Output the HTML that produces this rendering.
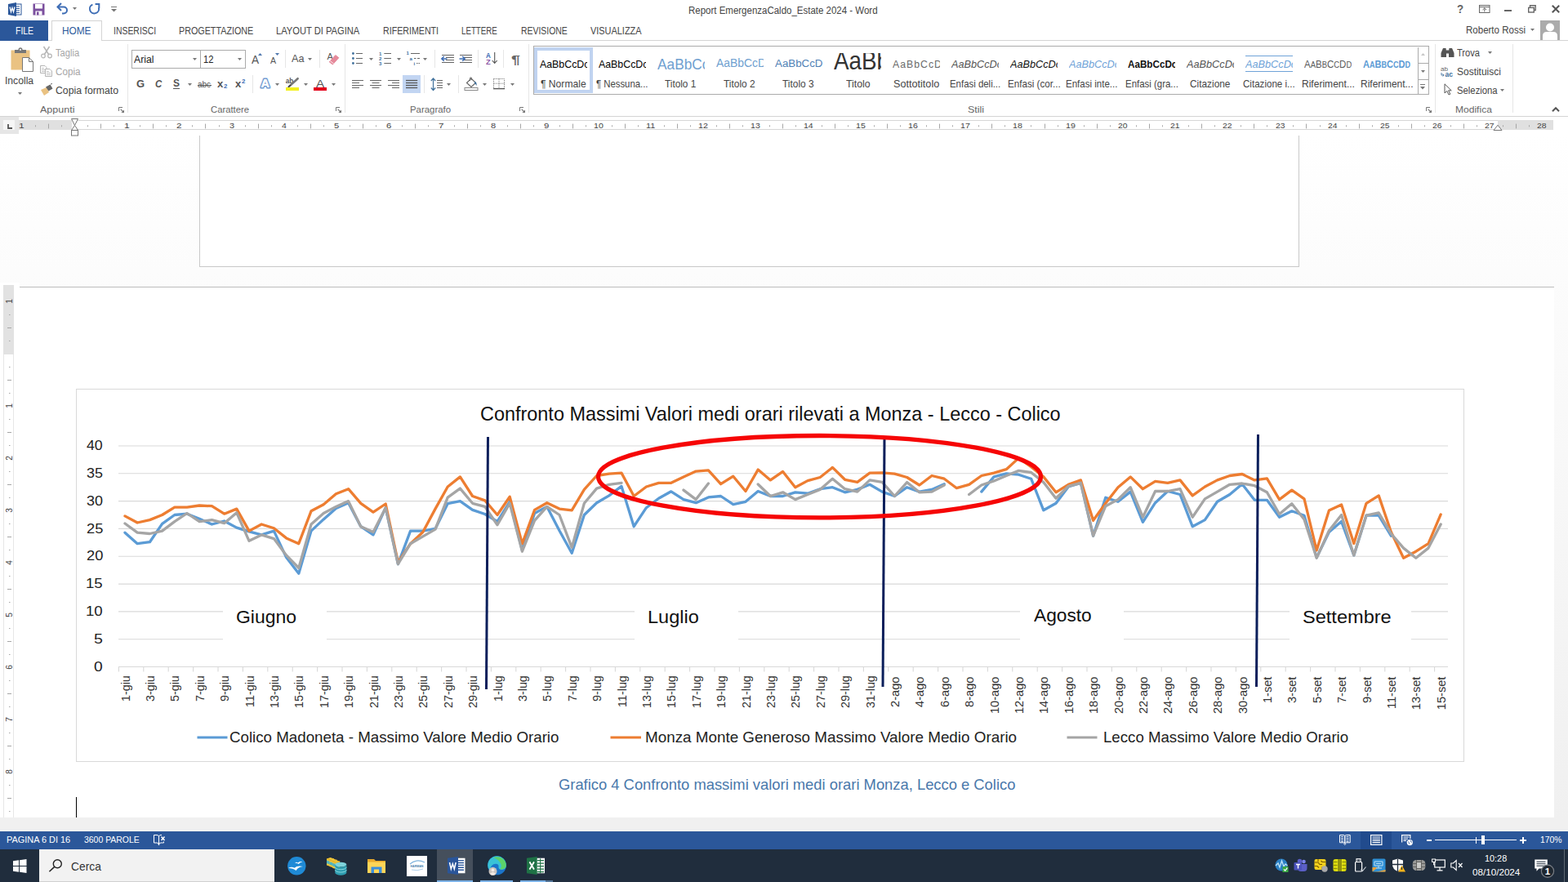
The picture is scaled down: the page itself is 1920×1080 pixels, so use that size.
<!DOCTYPE html><html lang="it"><head><meta charset="utf-8"><title>Report EmergenzaCaldo_Estate 2024 - Word</title><style>
*{box-sizing:border-box;margin:0;padding:0}
html,body{width:1920px;height:1080px;overflow:hidden;background:#fff}
body{position:relative;font-family:"Liberation Sans",sans-serif;font-size:12px;color:#444}
.t{position:absolute;white-space:nowrap;transform-origin:0 50%;display:block}
.a{position:absolute}
svg{position:absolute;overflow:visible}
</style></head><body>
<div class="a" style="left:0;top:0;width:1920px;height:144px;background:#fff"></div><span class="t" style="left:843.08px;top:6px;font-size:12.30px;line-height:14px;color:#444;transform:scaleX(0.9340);">Report EmergenzaCaldo_Estate 2024 - Word</span><svg style="left:10px;top:3px" width="17" height="17" viewBox="0 0 17 17"><rect x="7" y="2" width="9" height="13" fill="#fff" stroke="#2b579a"/><path d="M9 5h5M9 7.5h5M9 10h5M9 12.5h5" stroke="#2b579a" stroke-width="1"/><path d="M0 2L10 0V17L0 15Z" fill="#2b579a"/><path d="M2 5.5L3.5 11.5L5 6.5L6.5 11.5L8 5.5" fill="none" stroke="#fff" stroke-width="1.3"/></svg><svg style="left:40px;top:4px" width="15" height="15" viewBox="0 0 15 15"><path d="M0.5 0.5H14.5V14.5H0.5Z" fill="#7b4f9e"/><rect x="3" y="1" width="9" height="5.5" fill="#fff"/><rect x="3.5" y="9.5" width="8" height="5" fill="#fff"/><rect x="5" y="10.5" width="2.5" height="4" fill="#7b4f9e"/></svg><svg style="left:69px;top:3px" width="16" height="15" viewBox="0 0 16 15"><path d="M1.5 5.5H9A4 4 0 0 1 9 13.5H7" fill="none" stroke="#3e6db5" stroke-width="2"/><path d="M6 1L1.5 5.5L6 10" fill="none" stroke="#3e6db5" stroke-width="2"/></svg><svg style="left:89.0px;top:9.0px" width="5" height="3"><path d="M0 0H5 L2.5 3 Z" fill="#777"/></svg><svg style="left:108px;top:3px" width="16" height="15" viewBox="0 0 16 15"><path d="M5.4 2.6A5.6 5.6 0 1 0 12.9 6.4" fill="none" stroke="#3e6db5" stroke-width="2"/><path d="M8.6 2H13.3V7" fill="none" stroke="#3e6db5" stroke-width="2"/></svg><svg style="left:136px;top:8px" width="7" height="8"><path d="M0 0.5H7" stroke="#777" stroke-width="1"/><path d="M0 3H7L3.5 6.5Z" fill="#777"/></svg><span class="t" style="left:1784.47px;top:3px;font-size:14.60px;line-height:16px;color:#666;transform:scaleX(0.9089);font-weight:bold;">?</span><svg style="left:1811px;top:6px" width="14" height="10"><rect x="0.5" y="0.5" width="12.5" height="9" fill="none" stroke="#666"/><path d="M0.5 2.5H13 M6.8 8.5V4 M4.5 6L6.8 3.8L9 6" fill="none" stroke="#666"/></svg><div class="a" style="left:1842px;top:11.7px;width:9px;height:2.2px;background:#666"></div><svg style="left:1871px;top:6px" width="10" height="10"><path d="M2.5 3V0.8H9.2V6.5H7.5" fill="none" stroke="#666" stroke-width="1.4"/><rect x="0.7" y="3.4" width="6.6" height="5.6" fill="#fff" stroke="#666" stroke-width="1.4"/></svg><svg style="left:1900px;top:6px" width="10" height="10"><path d="M0.8 0.8L9.2 9.2M9.2 0.8L0.8 9.2" stroke="#555" stroke-width="2"/></svg><div class="a" style="left:0;top:49px;width:1920px;height:1px;background:#d4d4d4"></div><div class="a" style="left:0;top:25px;width:59px;height:25px;background:#2b579a"></div><div class="a" style="left:63px;top:25px;width:62px;height:25px;background:#fff;border:1px solid #d4d4d4;border-bottom:none"></div><span class="t" style="left:18.56px;top:31px;font-size:12.30px;line-height:14px;color:#fff;transform:scaleX(0.8498);">FILE</span><span class="t" style="left:75.55px;top:31px;font-size:12.30px;line-height:14px;color:#2b579a;transform:scaleX(0.9626);">HOME</span><span class="t" style="left:139.36px;top:31px;font-size:12.30px;line-height:14px;color:#444;transform:scaleX(0.8484);">INSERISCI</span><span class="t" style="left:219.14px;top:31px;font-size:12.30px;line-height:14px;color:#444;transform:scaleX(0.8752);">PROGETTAZIONE</span><span class="t" style="left:338.41px;top:31px;font-size:12.30px;line-height:14px;color:#444;transform:scaleX(0.9069);">LAYOUT DI PAGINA</span><span class="t" style="left:469.45px;top:31px;font-size:12.30px;line-height:14px;color:#444;transform:scaleX(0.8666);">RIFERIMENTI</span><span class="t" style="left:565.42px;top:31px;font-size:12.30px;line-height:14px;color:#444;transform:scaleX(0.7907);">LETTERE</span><span class="t" style="left:637.57px;top:31px;font-size:12.30px;line-height:14px;color:#444;transform:scaleX(0.8481);">REVISIONE</span><span class="t" style="left:723.20px;top:31px;font-size:12.30px;line-height:14px;color:#444;transform:scaleX(0.8882);">VISUALIZZA</span><span class="t" style="left:1794.58px;top:30px;font-size:12.00px;line-height:14px;color:#444;transform:scaleX(0.9599);">Roberto Rossi</span><svg style="left:1873.9px;top:35.1px" width="5" height="3"><path d="M0 0H5 L2.5 3 Z" fill="#777"/></svg><svg style="left:1886px;top:25px" width="24" height="24" viewBox="0 0 24 24"><rect width="24" height="24" fill="#ababab"/><circle cx="12" cy="8.5" r="5" fill="#fff"/><path d="M3 24V19Q3 14 8 14H16Q21 14 21 19V24Z" fill="#fff"/></svg><div class="a" style="left:0;top:142px;width:1920px;height:1px;background:#d4d4d4"></div><div class="a" style="left:156.0px;top:54.0px;width:1px;height:84.0px;background:#e6e6e6"></div><div class="a" style="left:422.0px;top:54.0px;width:1px;height:84.0px;background:#e6e6e6"></div><div class="a" style="left:647.0px;top:54.0px;width:1px;height:84.0px;background:#e6e6e6"></div><div class="a" style="left:1757.0px;top:54.0px;width:1px;height:84.0px;background:#e6e6e6"></div><div class="a" style="left:1852.0px;top:54.0px;width:1px;height:84.0px;background:#e6e6e6"></div><span class="t" style="left:49.00px;top:128px;font-size:11.30px;line-height:12px;color:#666;transform:scaleX(1.1108);">Appunti</span><svg style="left:144.5px;top:131.0px" width="8" height="8"><path d="M0.5 5V0.5H5" fill="none" stroke="#777" stroke-width="1"/><path d="M2.6 2.6L6 6" stroke="#777" stroke-width="1.1"/><path d="M7 3.4V7H3.4Z" fill="#777"/></svg><span class="t" style="left:258.04px;top:128px;font-size:11.30px;line-height:12px;color:#666;transform:scaleX(0.9977);">Carattere</span><svg style="left:411.0px;top:131.0px" width="8" height="8"><path d="M0.5 5V0.5H5" fill="none" stroke="#777" stroke-width="1"/><path d="M2.6 2.6L6 6" stroke="#777" stroke-width="1.1"/><path d="M7 3.4V7H3.4Z" fill="#777"/></svg><span class="t" style="left:501.79px;top:128px;font-size:11.30px;line-height:12px;color:#666;transform:scaleX(1.0090);">Paragrafo</span><svg style="left:636.0px;top:131.0px" width="8" height="8"><path d="M0.5 5V0.5H5" fill="none" stroke="#777" stroke-width="1"/><path d="M2.6 2.6L6 6" stroke="#777" stroke-width="1.1"/><path d="M7 3.4V7H3.4Z" fill="#777"/></svg><span class="t" style="left:1184.50px;top:128px;font-size:11.30px;line-height:12px;color:#666;transform:scaleX(1.1018);">Stili</span><svg style="left:1745.5px;top:131.0px" width="8" height="8"><path d="M0.5 5V0.5H5" fill="none" stroke="#777" stroke-width="1"/><path d="M2.6 2.6L6 6" stroke="#777" stroke-width="1.1"/><path d="M7 3.4V7H3.4Z" fill="#777"/></svg><span class="t" style="left:1781.74px;top:128px;font-size:11.30px;line-height:12px;color:#666;transform:scaleX(1.0668);">Modifica</span><svg style="left:1900px;top:131px" width="10" height="6"><path d="M1 5.2L5 1.2L9 5.2" fill="none" stroke="#555" stroke-width="2"/></svg><svg style="left:13px;top:58px" width="29" height="31" viewBox="0 0 29 31"><rect x="0.5" y="3.5" width="23" height="24" fill="#eac282"/><path d="M5 7V3H9.5Q9.5 0.3 12 0.3T14.5 3H19V7Z" fill="#777"/><circle cx="12" cy="2.8" r="1.1" fill="#fff"/><path d="M14.5 12.5H22.5L27.5 17.5V29.5H14.5Z" fill="#fff" stroke="#777"/><path d="M22.5 12.5V17.5H27.5" fill="none" stroke="#777"/></svg><span class="t" style="left:6.41px;top:92px;font-size:12.30px;line-height:14px;color:#444;transform:scaleX(0.9872);">Incolla</span><svg style="left:21.8px;top:112.5px" width="5" height="3"><path d="M0 0H5 L2.5 3 Z" fill="#777"/></svg><svg style="left:49px;top:56px" width="16" height="16" viewBox="0 0 16 16"><path d="M4.5 1L10.5 10.5 M11.5 1L5.5 10.5" stroke="#b5b5b5" stroke-width="1.5" fill="none"/><circle cx="4" cy="12.5" r="2.3" fill="none" stroke="#b5b5b5" stroke-width="1.2"/><circle cx="12" cy="12.5" r="2.3" fill="none" stroke="#b5b5b5" stroke-width="1.2"/></svg><span class="t" style="left:68.28px;top:58px;font-size:12.30px;line-height:14px;color:#a6a6a6;transform:scaleX(0.9068);">Taglia</span><svg style="left:49px;top:79px" width="16" height="16" viewBox="0 0 16 16"><path d="M0.5 1.5H6L8 3.5V10.5H0.5Z" fill="#fff" stroke="#b5b5b5"/><path d="M2 4.5H5M2 6.5H6M2 8.5H6" stroke="#c5c5c5"/><path d="M6.5 5.5H12L14.5 8V14.5H6.5Z" fill="#fff" stroke="#b5b5b5"/><path d="M8 8.5H11M8 10.5H13M8 12.5H13" stroke="#c5c5c5"/></svg><span class="t" style="left:67.92px;top:81px;font-size:12.30px;line-height:14px;color:#a6a6a6;transform:scaleX(0.9490);">Copia</span><svg style="left:49px;top:102px" width="17" height="16" viewBox="0 0 17 16"><path d="M1 8L8 5L11 11L5 15Z" fill="#eac282"/><path d="M7 4.5L12.5 1.5L15.5 6.5L10.5 9.5Z" fill="#666"/><path d="M13 1L15 0.5" stroke="#666"/></svg><span class="t" style="left:67.89px;top:104px;font-size:12.30px;line-height:14px;color:#444;transform:scaleX(0.9982);">Copia formato</span><div class="a" style="left:161px;top:61px;width:85px;height:23px;background:#fff;border:1px solid #ababab"></div><div class="a" style="left:245px;top:61px;width:56px;height:23px;background:#fff;border:1px solid #ababab"></div><span class="t" style="left:164.20px;top:66px;font-size:12.30px;line-height:14px;color:#222;transform:scaleX(0.9932);">Arial</span><span class="t" style="left:249.22px;top:66px;font-size:12.30px;line-height:14px;color:#222;transform:scaleX(0.9106);">12</span><svg style="left:235.7px;top:70.9px" width="5" height="3"><path d="M0 0H5 L2.5 3 Z" fill="#777"/></svg><svg style="left:290.9px;top:70.9px" width="5" height="3"><path d="M0 0H5 L2.5 3 Z" fill="#777"/></svg><span class="t" style="left:307.50px;top:65px;font-size:14.20px;line-height:16px;color:#555;transform:scaleX(0.9565);">A</span><svg style="left:315.7px;top:64.5px" width="5" height="3"><path d="M0 3H5L2.5 0Z" fill="#4f77ad"/></svg><span class="t" style="left:330.50px;top:68px;font-size:11.20px;line-height:12px;color:#555;transform:scaleX(0.9462);">A</span><svg style="left:337.0px;top:64.5px" width="5" height="3"><path d="M0 0H5 L2.5 3 Z" fill="#4f77ad"/></svg><div class="a" style="left:349.0px;top:61.0px;width:1px;height:22.0px;background:#e6e6e6"></div><span class="t" style="left:357.00px;top:65px;font-size:12.60px;line-height:14px;color:#555;transform:scaleX(1.0066);">Aa</span><svg style="left:376.9px;top:70.9px" width="5" height="3"><path d="M0 0H5 L2.5 3 Z" fill="#777"/></svg><div class="a" style="left:391.0px;top:61.0px;width:1px;height:22.0px;background:#e6e6e6"></div><svg style="left:400px;top:64px" width="16" height="16" viewBox="0 0 16 16"><text x="0.4" y="8.8" font-size="11" fill="#555" font-family="Liberation Sans, sans-serif">A</text><path d="M10.8 3.6L14.8 6.7L7.4 15L3.2 11.8Z" fill="#e58a9b" stroke="#e58a9b" stroke-width="1" stroke-linejoin="round"/><path d="M4.2 10.6L8.6 14" stroke="#fff" stroke-width="0.8"/></svg><span class="t" style="left:166.68px;top:96px;font-size:12.00px;line-height:14px;color:#555;transform:scaleX(1.0784);font-weight:bold;">G</span><span class="t" style="left:189.64px;top:96px;font-size:12.00px;line-height:14px;color:#555;transform:scaleX(0.9524);font-weight:bold;font-style:italic;">C</span><span class="t" style="left:212.16px;top:95px;font-size:12.00px;line-height:14px;color:#555;transform:scaleX(0.9973);font-weight:bold;">S</span><div class="a" style="left:212px;top:107.5px;width:8px;height:1.2px;background:#555"></div><svg style="left:229.9px;top:101.9px" width="5" height="3"><path d="M0 0H5 L2.5 3 Z" fill="#777"/></svg><span class="t" style="left:242.10px;top:97px;font-size:10.50px;line-height:12px;color:#555;transform:scaleX(0.9524);">abc</span><div class="a" style="left:242px;top:103.6px;width:16.5px;height:1.1px;background:#555"></div><span class="t" style="left:266.20px;top:96px;font-size:12.60px;line-height:14px;color:#555;transform:scaleX(1.0390);font-weight:bold;">x</span><span class="t" style="left:274.27px;top:102px;font-size:6.50px;line-height:7px;color:#3e6db5;transform:scaleX(1.1931);font-weight:bold;">2</span><span class="t" style="left:288.30px;top:96px;font-size:12.60px;line-height:14px;color:#555;transform:scaleX(1.0390);font-weight:bold;">x</span><span class="t" style="left:296.17px;top:96px;font-size:6.50px;line-height:7px;color:#3e6db5;transform:scaleX(1.1931);font-weight:bold;">2</span><div class="a" style="left:309.0px;top:92.3px;width:1px;height:21.9px;background:#e6e6e6"></div><svg style="left:317px;top:94px" width="16" height="17" viewBox="0 0 16 17"><g font-size="14.5" font-weight="bold" font-family="Liberation Sans, sans-serif" stroke-linejoin="round"><text x="2.6" y="13.4" fill="#c9dcf4" stroke="#c9dcf4" stroke-width="4.2">A</text><text x="2.6" y="13.4" fill="#4a7cc0" stroke="#4a7cc0" stroke-width="2.4">A</text><text x="2.6" y="13.4" fill="#fff" stroke="#fff" stroke-width="0.7">A</text></g></svg><svg style="left:336.8px;top:101.9px" width="5" height="3"><path d="M0 0H5 L2.5 3 Z" fill="#777"/></svg><svg style="left:349px;top:95px" width="18" height="17" viewBox="0 0 18 17"><text x="0.8" y="7" font-size="9.6" font-weight="bold" fill="#555" font-family="Liberation Sans, sans-serif" textLength="9.5" lengthAdjust="spacingAndGlyphs">ab</text><path d="M15.6 1.2L5.6 10.4" stroke="#777" stroke-width="2.6" stroke-linecap="round"/><path d="M6.6 9.4L4.2 11.4" stroke="#444" stroke-width="1.6" stroke-linecap="round"/><rect x="1" y="12" width="16" height="4" fill="#f3f01e"/></svg><svg style="left:371.8px;top:101.9px" width="5" height="3"><path d="M0 0H5 L2.5 3 Z" fill="#777"/></svg><span class="t" style="left:387.00px;top:95px;font-size:13.00px;line-height:15px;color:#555;transform:scaleX(1.1711);">A</span><div class="a" style="left:384px;top:107.2px;width:16px;height:4px;background:#e3001b"></div><svg style="left:405.9px;top:101.9px" width="5" height="3"><path d="M0 0H5 L2.5 3 Z" fill="#777"/></svg><svg style="left:430px;top:62px" width="16" height="18"><circle cx="2.4" cy="3.5" r="1.4" fill="#41719c"/><path d="M6 3.5H14" stroke="#666" stroke-width="1"/><circle cx="2.4" cy="9.5" r="1.4" fill="#41719c"/><path d="M6 9.5H14" stroke="#666" stroke-width="1"/><circle cx="2.4" cy="15.5" r="1.4" fill="#41719c"/><path d="M6 15.5H14" stroke="#666" stroke-width="1"/></svg><svg style="left:452.1px;top:70.9px" width="5" height="3"><path d="M0 0H5 L2.5 3 Z" fill="#777"/></svg><svg style="left:463px;top:62px" width="17" height="18"><text x="1" y="5.7" font-size="6" font-weight="bold" fill="#41719c" font-family="Liberation Sans, sans-serif">1</text><path d="M7.3 3.5H16" stroke="#666" stroke-width="1"/><text x="1" y="11.7" font-size="6" font-weight="bold" fill="#41719c" font-family="Liberation Sans, sans-serif">2</text><path d="M7.3 9.5H16" stroke="#666" stroke-width="1"/><text x="1" y="17.7" font-size="6" font-weight="bold" fill="#41719c" font-family="Liberation Sans, sans-serif">3</text><path d="M7.3 15.5H16" stroke="#666" stroke-width="1"/></svg><svg style="left:485.8px;top:70.9px" width="5" height="3"><path d="M0 0H5 L2.5 3 Z" fill="#777"/></svg><svg style="left:497px;top:62px" width="18" height="18"><text x="0.5" y="5.2" font-size="6" font-weight="bold" fill="#41719c" font-family="Liberation Sans, sans-serif">1</text><path d="M6 3.5H17" stroke="#666" stroke-width="1"/><text x="4.5" y="11.6" font-size="6" font-weight="bold" fill="#41719c" font-family="Liberation Sans, sans-serif">a</text><path d="M10 9.5H12.5M14 9.5H17" stroke="#666" stroke-width="1"/><text x="9.5" y="17.6" font-size="6" font-weight="bold" fill="#41719c" font-family="Liberation Sans, sans-serif">i</text><path d="M13 15.5H14.5M15.5 15.5H17" stroke="#666" stroke-width="1"/></svg><svg style="left:517.8px;top:70.9px" width="5" height="3"><path d="M0 0H5 L2.5 3 Z" fill="#777"/></svg><div class="a" style="left:532.0px;top:61.0px;width:1px;height:22.0px;background:#e6e6e6"></div><svg style="left:539.9px;top:65px" width="17" height="14"><path d="M1 2.5H16" stroke="#666" stroke-width="1"/><path d="M6 5.5H16" stroke="#666" stroke-width="1"/><path d="M6 8.5H16" stroke="#666" stroke-width="1"/><path d="M1 11.5H16" stroke="#666" stroke-width="1"/><path d="M7.5 6.9H1 M3.8 4L0.8 6.9L3.8 9.8" fill="none" stroke="#3e6db5" stroke-width="1.5"/></svg><svg style="left:562.2px;top:65px" width="17" height="14"><path d="M1 2.5H16" stroke="#666" stroke-width="1"/><path d="M6 5.5H16" stroke="#666" stroke-width="1"/><path d="M6 8.5H16" stroke="#666" stroke-width="1"/><path d="M1 11.5H16" stroke="#666" stroke-width="1"/><path d="M0.5 6.9H7 M4.2 4L7.2 6.9L4.2 9.8" fill="none" stroke="#3e6db5" stroke-width="1.5"/></svg><div class="a" style="left:585.0px;top:61.0px;width:1px;height:22.0px;background:#e6e6e6"></div><span class="t" style="left:595.14px;top:63px;font-size:8.80px;line-height:10px;color:#3e6db5;transform:scaleX(0.9191);font-weight:bold;">A</span><span class="t" style="left:595.11px;top:71px;font-size:8.80px;line-height:10px;color:#8e5ba8;transform:scaleX(1.0566);font-weight:bold;">Z</span><svg style="left:602px;top:64px" width="8" height="15"><path d="M3.7 0V13 M0.7 10L3.7 13.4L6.7 10" fill="none" stroke="#555" stroke-width="1.1"/></svg><div class="a" style="left:616.0px;top:61.0px;width:1px;height:22.0px;background:#e6e6e6"></div><span class="t" style="left:626.41px;top:64px;font-size:15.00px;line-height:17px;color:#666;transform:scaleX(1.3067);font-weight:bold;">¶</span><svg style="left:431.0px;top:96px" width="15" height="14"><path d="M0.0 2.5h14" stroke="#666" stroke-width="1"/><path d="M0.0 5.5h9" stroke="#666" stroke-width="1"/><path d="M0.0 8.5h14" stroke="#666" stroke-width="1"/><path d="M0.0 11.5h9" stroke="#666" stroke-width="1"/></svg><svg style="left:452.8px;top:96px" width="15" height="14"><path d="M0.0 2.5h14" stroke="#666" stroke-width="1"/><path d="M2.5 5.5h9" stroke="#666" stroke-width="1"/><path d="M0.0 8.5h14" stroke="#666" stroke-width="1"/><path d="M2.5 11.5h9" stroke="#666" stroke-width="1"/></svg><svg style="left:474.8px;top:96px" width="15" height="14"><path d="M0.0 2.5h14" stroke="#666" stroke-width="1"/><path d="M5.0 5.5h9" stroke="#666" stroke-width="1"/><path d="M0.0 8.5h14" stroke="#666" stroke-width="1"/><path d="M5.0 11.5h9" stroke="#666" stroke-width="1"/></svg><div class="a" style="left:493px;top:92.3px;width:22px;height:22.2px;background:#c2d5f2"></div><svg style="left:497px;top:96px" width="15" height="14"><path d="M0 2.5h14.2" stroke="#555" stroke-width="1.25"/><path d="M0 5.5h14.2" stroke="#555" stroke-width="1.25"/><path d="M0 8.5h14.2" stroke="#555" stroke-width="1.25"/><path d="M0 11.5h14.2" stroke="#555" stroke-width="1.25"/></svg><div class="a" style="left:519.0px;top:92.3px;width:1px;height:21.9px;background:#e6e6e6"></div><svg style="left:527px;top:95px" width="16" height="17"><path d="M3.5 1V15.5 M0.8 4L3.5 1L6.2 4 M0.8 12.5L3.5 15.5L6.2 12.5" fill="none" stroke="#41719c" stroke-width="1.2"/><path d="M8 3.5H15" stroke="#666" stroke-width="1"/><path d="M8 6.5H15" stroke="#666" stroke-width="1"/><path d="M8 9.5H15" stroke="#666" stroke-width="1"/><path d="M8 12.5H15" stroke="#666" stroke-width="1"/></svg><svg style="left:547.0px;top:101.9px" width="5" height="3"><path d="M0 0H5 L2.5 3 Z" fill="#777"/></svg><div class="a" style="left:561.0px;top:92.3px;width:1px;height:21.9px;background:#e6e6e6"></div><svg style="left:568px;top:94px" width="18" height="17" viewBox="0 0 18 17"><path d="M3.5 7.5L9 2L14.5 7.5L9 12.5Z" fill="#fff" stroke="#666" stroke-width="1.2"/><path d="M7.5 5V1.8Q7.5 0.8 8.5 0.8T9.5 1.8V4" fill="none" stroke="#666" stroke-width="1"/><path d="M13 5.5Q16.5 7 15.5 11Q14.5 9 13 8Z" fill="#41719c"/><rect x="1" y="13.5" width="16" height="3" fill="#fff" stroke="#888"/></svg><svg style="left:590.8px;top:101.9px" width="5" height="3"><path d="M0 0H5 L2.5 3 Z" fill="#777"/></svg><svg style="left:604px;top:96px" width="14" height="14"><path d="M0.5 0.5H13.5V12 M0.5 0.5V12 M7 0.5V12 M0.5 6.2H13.5" fill="none" stroke="#777" stroke-dasharray="1.2 1.2"/><path d="M0 12.6H14" stroke="#555" stroke-width="1.4"/></svg><svg style="left:624.9px;top:101.9px" width="5" height="3"><path d="M0 0H5 L2.5 3 Z" fill="#777"/></svg><div class="a" style="left:653px;top:56px;width:1097px;height:60px;background:#fff;border:1px solid #ababab"></div><div class="a" style="left:654px;top:58px;width:72px;height:56px;border:4px solid #c0d3f0;background:#fff"></div><div class="a" style="left:1735.5px;top:57.5px;width:1px;height:57px;background:#ababab"></div><div class="a" style="left:1735.5px;top:77px;width:14px;height:1px;background:#ababab"></div><div class="a" style="left:1735.5px;top:96.5px;width:14px;height:1px;background:#ababab"></div><svg style="left:1739.6px;top:65.2px" width="5" height="3"><path d="M0 3H5L2.5 0Z" fill="#c6c6c6"/></svg><svg style="left:1739.7px;top:85.9px" width="5" height="3"><path d="M0 0H5 L2.5 3 Z" fill="#777"/></svg><svg style="left:1739.2px;top:102.6px" width="6" height="7"><path d="M0 0.5H6" stroke="#777"/><path d="M0 3H6L3 6.5Z" fill="#777"/></svg><div class="a" style="left:660.9px;top:60px;width:58.1px;height:30px;overflow:hidden"><span class="t" style="left:0.00px;top:11px;font-size:12.90px;line-height:15px;color:#000;transform:scaleX(0.9587);">AaBbCcDc</span></div><div class="a" style="left:732.7px;top:60px;width:58.3px;height:30px;overflow:hidden"><span class="t" style="left:0.00px;top:11px;font-size:12.90px;line-height:15px;color:#000;transform:scaleX(0.9587);">AaBbCcDc</span></div><div class="a" style="left:804.7px;top:60px;width:58.1px;height:30px;overflow:hidden"><span class="t" style="left:0.00px;top:8px;font-size:19.00px;line-height:21px;color:#6f9fd0;transform:scaleX(0.9103);">AaBbCcD</span></div><div class="a" style="left:876.9px;top:60px;width:58.1px;height:30px;overflow:hidden"><span class="t" style="left:0.00px;top:9px;font-size:14.70px;line-height:16px;color:#6f9fd0;transform:scaleX(0.9476);">AaBbCcDd</span></div><div class="a" style="left:948.7px;top:60px;width:59.3px;height:30px;overflow:hidden"><span class="t" style="left:0.00px;top:10px;font-size:13.70px;line-height:15px;color:#5081b5;transform:scaleX(0.9725);">AaBbCcD</span></div><div class="a" style="left:1021.3px;top:65px;width:58.1px;height:25px;overflow:hidden"><span class="t" style="left:0.00px;top:-9px;font-size:32.00px;line-height:36px;color:#333;transform:scaleX(0.8680);">AaBb</span></div><div class="a" style="left:1092.9px;top:60px;width:58.1px;height:30px;overflow:hidden"><span class="t" style="left:0.00px;top:12px;font-size:12.00px;line-height:14px;color:#6a6a6a;transform:scaleX(1.0216);letter-spacing:1.00px;">AaBbCcDd</span></div><div class="a" style="left:1165.3px;top:60px;width:58.1px;height:30px;overflow:hidden"><span class="t" style="left:0.00px;top:11px;font-size:12.90px;line-height:15px;color:#555;transform:scaleX(0.9834);font-style:italic;">AaBbCcDc</span></div><div class="a" style="left:1237.3px;top:60px;width:57.9px;height:30px;overflow:hidden"><span class="t" style="left:0.00px;top:11px;font-size:12.90px;line-height:15px;color:#111;transform:scaleX(0.9834);font-style:italic;">AaBbCcDc</span></div><div class="a" style="left:1309.0px;top:60px;width:58.0px;height:30px;overflow:hidden"><span class="t" style="left:0.00px;top:11px;font-size:12.90px;line-height:15px;color:#6fa3d8;transform:scaleX(0.9852);font-style:italic;">AaBbCcDc</span></div><div class="a" style="left:1380.6px;top:60px;width:58.4px;height:30px;overflow:hidden"><span class="t" style="left:0.00px;top:11px;font-size:12.90px;line-height:15px;color:#111;transform:scaleX(0.9060);font-weight:bold;">AaBbCcDc</span></div><div class="a" style="left:1452.9px;top:60px;width:58.3px;height:30px;overflow:hidden"><span class="t" style="left:0.00px;top:11px;font-size:12.90px;line-height:15px;color:#555;transform:scaleX(0.9870);font-style:italic;">AaBbCcDc</span></div><div class="a" style="left:1524.8px;top:60px;width:58.2px;height:30px;overflow:hidden"><span class="t" style="left:0.00px;top:11px;font-size:12.90px;line-height:15px;color:#6fa3d8;transform:scaleX(0.9870);font-style:italic;">AaBbCcDc</span></div><div class="a" style="left:1597.1px;top:60px;width:57.9px;height:30px;overflow:hidden"><span class="t" style="left:0;top:12px;font-size:12.40px;line-height:14px;color:#5a5a5a;transform:scaleX(0.9285);">A<span style="font-size:10.17px">A</span>B<span style="font-size:10.17px">B</span>C<span style="font-size:10.17px">C</span>D<span style="font-size:10.17px">D</span>E<span style="font-size:10.17px">E</span></span></div><div class="a" style="left:1669.0px;top:60px;width:58.0px;height:30px;overflow:hidden"><span class="t" style="left:0;top:12px;font-size:12.40px;line-height:14px;color:#5b9bd5;transform:scaleX(0.8902);font-weight:bold;">A<span style="font-size:10.17px">A</span>B<span style="font-size:10.17px">B</span>C<span style="font-size:10.17px">C</span>D<span style="font-size:10.17px">D</span>E<span style="font-size:10.17px">E</span></span></div><span class="t" style="left:661.84px;top:96px;font-size:12.10px;line-height:14px;color:#444;transform:scaleX(1.0016);">¶ Normale</span><span class="t" style="left:729.96px;top:96px;font-size:12.10px;line-height:14px;color:#444;transform:scaleX(0.9380);">¶ Nessuna...</span><span class="t" style="left:814.36px;top:96px;font-size:12.10px;line-height:14px;color:#444;transform:scaleX(0.9746);">Titolo 1</span><span class="t" style="left:886.36px;top:96px;font-size:12.10px;line-height:14px;color:#444;transform:scaleX(0.9876);">Titolo 2</span><span class="t" style="left:958.36px;top:96px;font-size:12.10px;line-height:14px;color:#444;transform:scaleX(0.9845);">Titolo 3</span><span class="t" style="left:1035.65px;top:96px;font-size:12.10px;line-height:14px;color:#444;transform:scaleX(1.0164);">Titolo</span><span class="t" style="left:1093.89px;top:96px;font-size:12.10px;line-height:14px;color:#444;transform:scaleX(1.0458);">Sottotitolo</span><span class="t" style="left:1162.89px;top:96px;font-size:12.10px;line-height:14px;color:#444;transform:scaleX(0.9438);">Enfasi deli...</span><span class="t" style="left:1233.67px;top:96px;font-size:12.10px;line-height:14px;color:#444;transform:scaleX(0.9614);">Enfasi (cor...</span><span class="t" style="left:1305.38px;top:96px;font-size:12.10px;line-height:14px;color:#444;transform:scaleX(0.9536);">Enfasi inte...</span><span class="t" style="left:1377.58px;top:96px;font-size:12.10px;line-height:14px;color:#444;transform:scaleX(0.9467);">Enfasi (gra...</span><span class="t" style="left:1456.71px;top:96px;font-size:12.10px;line-height:14px;color:#444;transform:scaleX(0.9804);">Citazione</span><span class="t" style="left:1522.22px;top:96px;font-size:12.10px;line-height:14px;color:#444;transform:scaleX(0.9575);">Citazione i...</span><span class="t" style="left:1593.54px;top:96px;font-size:12.10px;line-height:14px;color:#444;transform:scaleX(0.9959);">Riferiment...</span><span class="t" style="left:1665.64px;top:96px;font-size:12.10px;line-height:14px;color:#444;transform:scaleX(0.9895);">Riferiment...</span><div class="a" style="left:1525px;top:68px;width:58px;height:1px;background:#6fa3d8"></div><div class="a" style="left:1525px;top:87px;width:58px;height:1px;background:#6fa3d8"></div><svg style="left:1764px;top:58px" width="17" height="13" viewBox="0 0 17 13"><path d="M1.5 4.5L3 1H6.5L7 4.5V12H0.5V7Z M15.5 4.5L14 1H10.5L10 4.5V12H16.5V7Z" fill="#555"/><rect x="7" y="3.5" width="3" height="4" fill="#555"/></svg><span class="t" style="left:1783.78px;top:58px;font-size:12.30px;line-height:14px;color:#444;transform:scaleX(0.9008);">Trova</span><svg style="left:1821.5px;top:63.0px" width="5" height="3"><path d="M0 0H5 L2.5 3 Z" fill="#777"/></svg><svg style="left:1764px;top:80px" width="18" height="15" viewBox="0 0 18 15"><text x="0" y="6.5" font-size="8" fill="#666" font-family="Liberation Sans, sans-serif">ab</text><text x="5.5" y="14" font-size="8.5" font-weight="bold" fill="#41719c" font-family="Liberation Sans, sans-serif">ac</text><path d="M1 9V12H4 M2.6 10.5L4.2 12L2.6 13.5" fill="none" stroke="#41719c" stroke-width="0.9"/></svg><span class="t" style="left:1783.52px;top:81px;font-size:12.30px;line-height:14px;color:#444;transform:scaleX(0.9738);">Sostituisci</span><svg style="left:1768px;top:102px" width="10" height="15"><path d="M1 0.8V12L3.8 9.4L6 14L7.8 13.2L5.6 8.8H9.2Z" fill="#fff" stroke="#555" stroke-width="1"/></svg><span class="t" style="left:1783.55px;top:104px;font-size:12.30px;line-height:14px;color:#444;transform:scaleX(0.9193);">Seleziona</span><svg style="left:1837.0px;top:109.1px" width="5" height="3"><path d="M0 0H5 L2.5 3 Z" fill="#777"/></svg>
<div class="a" style="left:0;top:144px;width:1920px;height:874px;background:linear-gradient(#fff 20px,#f0f0f0 860px)"></div>
<div class="a" style="left:0;top:143px;width:1920px;height:21px;background:#fff"></div><div class="a" style="left:0;top:143px;width:23px;height:21px;background:#e6e6e6"></div><div class="a" style="left:23px;top:147px;width:65px;height:12px;background:#e0e0e0"></div><div class="a" style="left:88px;top:147px;width:1746px;height:12px;background:#fff;border-top:1px solid #d6d6d6;border-bottom:1px solid #d6d6d6"></div><div class="a" style="left:1834px;top:147px;width:68px;height:12px;background:#e0e0e0"></div><div class="a" style="left:4px;top:147px;width:14px;height:12px;background:#f6f6f6"></div><svg style="left:9px;top:152px" width="7" height="7"><path d="M1 0V5H6" fill="none" stroke="#555" stroke-width="1.8"/></svg><svg style="left:0;top:147px" width="1920" height="16"><path d="M59.5 4.6V10.4" stroke="#a6a6a6" stroke-width="1"/><rect x="43.0" y="6.3" width="1" height="2" fill="#a6a6a6"/><rect x="75.0" y="6.3" width="1" height="2" fill="#a6a6a6"/><path d="M123.5 4.6V10.4" stroke="#a6a6a6" stroke-width="1"/><rect x="107.0" y="6.3" width="1" height="2" fill="#a6a6a6"/><rect x="139.0" y="6.3" width="1" height="2" fill="#a6a6a6"/><path d="M187.5 4.6V10.4" stroke="#a6a6a6" stroke-width="1"/><rect x="171.0" y="6.3" width="1" height="2" fill="#a6a6a6"/><rect x="203.0" y="6.3" width="1" height="2" fill="#a6a6a6"/><path d="M251.5 4.6V10.4" stroke="#a6a6a6" stroke-width="1"/><rect x="235.0" y="6.3" width="1" height="2" fill="#a6a6a6"/><rect x="268.0" y="6.3" width="1" height="2" fill="#a6a6a6"/><path d="M316.5 4.6V10.4" stroke="#a6a6a6" stroke-width="1"/><rect x="300.0" y="6.3" width="1" height="2" fill="#a6a6a6"/><rect x="332.0" y="6.3" width="1" height="2" fill="#a6a6a6"/><path d="M380.5 4.6V10.4" stroke="#a6a6a6" stroke-width="1"/><rect x="364.0" y="6.3" width="1" height="2" fill="#a6a6a6"/><rect x="396.0" y="6.3" width="1" height="2" fill="#a6a6a6"/><path d="M444.5 4.6V10.4" stroke="#a6a6a6" stroke-width="1"/><rect x="428.0" y="6.3" width="1" height="2" fill="#a6a6a6"/><rect x="460.0" y="6.3" width="1" height="2" fill="#a6a6a6"/><path d="M508.5 4.6V10.4" stroke="#a6a6a6" stroke-width="1"/><rect x="492.0" y="6.3" width="1" height="2" fill="#a6a6a6"/><rect x="524.0" y="6.3" width="1" height="2" fill="#a6a6a6"/><path d="M572.5 4.6V10.4" stroke="#a6a6a6" stroke-width="1"/><rect x="556.0" y="6.3" width="1" height="2" fill="#a6a6a6"/><rect x="588.0" y="6.3" width="1" height="2" fill="#a6a6a6"/><path d="M637.5 4.6V10.4" stroke="#a6a6a6" stroke-width="1"/><rect x="621.0" y="6.3" width="1" height="2" fill="#a6a6a6"/><rect x="653.0" y="6.3" width="1" height="2" fill="#a6a6a6"/><path d="M701.5 4.6V10.4" stroke="#a6a6a6" stroke-width="1"/><rect x="685.0" y="6.3" width="1" height="2" fill="#a6a6a6"/><rect x="717.0" y="6.3" width="1" height="2" fill="#a6a6a6"/><path d="M765.5 4.6V10.4" stroke="#a6a6a6" stroke-width="1"/><rect x="749.0" y="6.3" width="1" height="2" fill="#a6a6a6"/><rect x="781.0" y="6.3" width="1" height="2" fill="#a6a6a6"/><path d="M829.5 4.6V10.4" stroke="#a6a6a6" stroke-width="1"/><rect x="813.0" y="6.3" width="1" height="2" fill="#a6a6a6"/><rect x="845.0" y="6.3" width="1" height="2" fill="#a6a6a6"/><path d="M893.5 4.6V10.4" stroke="#a6a6a6" stroke-width="1"/><rect x="877.0" y="6.3" width="1" height="2" fill="#a6a6a6"/><rect x="909.0" y="6.3" width="1" height="2" fill="#a6a6a6"/><path d="M958.5 4.6V10.4" stroke="#a6a6a6" stroke-width="1"/><rect x="942.0" y="6.3" width="1" height="2" fill="#a6a6a6"/><rect x="974.0" y="6.3" width="1" height="2" fill="#a6a6a6"/><path d="M1022.5 4.6V10.4" stroke="#a6a6a6" stroke-width="1"/><rect x="1006.0" y="6.3" width="1" height="2" fill="#a6a6a6"/><rect x="1038.0" y="6.3" width="1" height="2" fill="#a6a6a6"/><path d="M1086.5 4.6V10.4" stroke="#a6a6a6" stroke-width="1"/><rect x="1070.0" y="6.3" width="1" height="2" fill="#a6a6a6"/><rect x="1102.0" y="6.3" width="1" height="2" fill="#a6a6a6"/><path d="M1150.5 4.6V10.4" stroke="#a6a6a6" stroke-width="1"/><rect x="1134.0" y="6.3" width="1" height="2" fill="#a6a6a6"/><rect x="1166.0" y="6.3" width="1" height="2" fill="#a6a6a6"/><path d="M1214.5 4.6V10.4" stroke="#a6a6a6" stroke-width="1"/><rect x="1198.0" y="6.3" width="1" height="2" fill="#a6a6a6"/><rect x="1230.0" y="6.3" width="1" height="2" fill="#a6a6a6"/><path d="M1279.5 4.6V10.4" stroke="#a6a6a6" stroke-width="1"/><rect x="1262.0" y="6.3" width="1" height="2" fill="#a6a6a6"/><rect x="1295.0" y="6.3" width="1" height="2" fill="#a6a6a6"/><path d="M1343.5 4.6V10.4" stroke="#a6a6a6" stroke-width="1"/><rect x="1327.0" y="6.3" width="1" height="2" fill="#a6a6a6"/><rect x="1359.0" y="6.3" width="1" height="2" fill="#a6a6a6"/><path d="M1407.5 4.6V10.4" stroke="#a6a6a6" stroke-width="1"/><rect x="1391.0" y="6.3" width="1" height="2" fill="#a6a6a6"/><rect x="1423.0" y="6.3" width="1" height="2" fill="#a6a6a6"/><path d="M1471.5 4.6V10.4" stroke="#a6a6a6" stroke-width="1"/><rect x="1455.0" y="6.3" width="1" height="2" fill="#a6a6a6"/><rect x="1487.0" y="6.3" width="1" height="2" fill="#a6a6a6"/><path d="M1535.5 4.6V10.4" stroke="#a6a6a6" stroke-width="1"/><rect x="1519.0" y="6.3" width="1" height="2" fill="#a6a6a6"/><rect x="1551.0" y="6.3" width="1" height="2" fill="#a6a6a6"/><path d="M1599.5 4.6V10.4" stroke="#a6a6a6" stroke-width="1"/><rect x="1583.0" y="6.3" width="1" height="2" fill="#a6a6a6"/><rect x="1616.0" y="6.3" width="1" height="2" fill="#a6a6a6"/><path d="M1664.5 4.6V10.4" stroke="#a6a6a6" stroke-width="1"/><rect x="1648.0" y="6.3" width="1" height="2" fill="#a6a6a6"/><rect x="1680.0" y="6.3" width="1" height="2" fill="#a6a6a6"/><path d="M1728.5 4.6V10.4" stroke="#a6a6a6" stroke-width="1"/><rect x="1712.0" y="6.3" width="1" height="2" fill="#a6a6a6"/><rect x="1744.0" y="6.3" width="1" height="2" fill="#a6a6a6"/><path d="M1792.5 4.6V10.4" stroke="#a6a6a6" stroke-width="1"/><rect x="1776.0" y="6.3" width="1" height="2" fill="#a6a6a6"/><rect x="1808.0" y="6.3" width="1" height="2" fill="#a6a6a6"/><path d="M1856.5 4.6V10.4" stroke="#a6a6a6" stroke-width="1"/><rect x="1840.0" y="6.3" width="1" height="2" fill="#a6a6a6"/><rect x="1872.0" y="6.3" width="1" height="2" fill="#a6a6a6"/></svg><span class="t" style="left:23.29px;top:148px;font-size:9.80px;line-height:11px;color:#444;transform:scaleX(1.2381);">1</span><span class="t" style="left:151.67px;top:148px;font-size:9.80px;line-height:11px;color:#444;transform:scaleX(1.2381);">1</span><span class="t" style="left:216.13px;top:148px;font-size:9.80px;line-height:11px;color:#444;transform:scaleX(1.1842);">2</span><span class="t" style="left:280.57px;top:148px;font-size:9.80px;line-height:11px;color:#444;transform:scaleX(1.1117);">3</span><span class="t" style="left:344.88px;top:148px;font-size:9.80px;line-height:11px;color:#444;transform:scaleX(1.0681);">4</span><span class="t" style="left:408.84px;top:148px;font-size:9.80px;line-height:11px;color:#444;transform:scaleX(1.1349);">5</span><span class="t" style="left:472.90px;top:148px;font-size:9.80px;line-height:11px;color:#444;transform:scaleX(1.1590);">6</span><span class="t" style="left:537.08px;top:148px;font-size:9.80px;line-height:11px;color:#444;transform:scaleX(1.1842);">7</span><span class="t" style="left:601.41px;top:148px;font-size:9.80px;line-height:11px;color:#444;transform:scaleX(1.1349);">8</span><span class="t" style="left:665.59px;top:148px;font-size:9.80px;line-height:11px;color:#444;transform:scaleX(1.1590);">9</span><span class="t" style="left:726.82px;top:148px;font-size:9.80px;line-height:11px;color:#444;transform:scaleX(1.0787);">10</span><span class="t" style="left:791.35px;top:148px;font-size:9.80px;line-height:11px;color:#444;transform:scaleX(1.1052);">11</span><span class="t" style="left:855.19px;top:148px;font-size:9.80px;line-height:11px;color:#444;transform:scaleX(1.0895);">12</span><span class="t" style="left:919.39px;top:148px;font-size:9.80px;line-height:11px;color:#444;transform:scaleX(1.0787);">13</span><span class="t" style="left:983.59px;top:148px;font-size:9.80px;line-height:11px;color:#444;transform:scaleX(1.0681);">14</span><span class="t" style="left:1047.77px;top:148px;font-size:9.80px;line-height:11px;color:#444;transform:scaleX(1.0787);">15</span><span class="t" style="left:1111.96px;top:148px;font-size:9.80px;line-height:11px;color:#444;transform:scaleX(1.0787);">16</span><span class="t" style="left:1176.14px;top:148px;font-size:9.80px;line-height:11px;color:#444;transform:scaleX(1.0895);">17</span><span class="t" style="left:1240.34px;top:148px;font-size:9.80px;line-height:11px;color:#444;transform:scaleX(1.0787);">18</span><span class="t" style="left:1304.52px;top:148px;font-size:9.80px;line-height:11px;color:#444;transform:scaleX(1.0895);">19</span><span class="t" style="left:1368.94px;top:148px;font-size:9.80px;line-height:11px;color:#444;transform:scaleX(1.0578);">20</span><span class="t" style="left:1433.13px;top:148px;font-size:9.80px;line-height:11px;color:#444;transform:scaleX(1.0681);">21</span><span class="t" style="left:1497.32px;top:148px;font-size:9.80px;line-height:11px;color:#444;transform:scaleX(1.0681);">22</span><span class="t" style="left:1561.51px;top:148px;font-size:9.80px;line-height:11px;color:#444;transform:scaleX(1.0578);">23</span><span class="t" style="left:1625.71px;top:148px;font-size:9.80px;line-height:11px;color:#444;transform:scaleX(1.0476);">24</span><span class="t" style="left:1689.89px;top:148px;font-size:9.80px;line-height:11px;color:#444;transform:scaleX(1.0578);">25</span><span class="t" style="left:1754.08px;top:148px;font-size:9.80px;line-height:11px;color:#444;transform:scaleX(1.0578);">26</span><span class="t" style="left:1818.27px;top:148px;font-size:9.80px;line-height:11px;color:#444;transform:scaleX(1.0681);">27</span><span class="t" style="left:1882.46px;top:148px;font-size:9.80px;line-height:11px;color:#444;transform:scaleX(1.0578);">28</span><svg style="left:87px;top:145px" width="10" height="22"><path d="M0.5 0.5H8.5L4.5 8.5Z M4.5 8.5L8.5 14.5H0.5Z" fill="#fff" stroke="#777" stroke-width="1"/><rect x="0.5" y="14.5" width="8" height="6.5" fill="#fff" stroke="#777"/></svg><svg style="left:1828px;top:152px" width="12" height="9"><path d="M1 7.5L6 1.2L11 7.5Z" fill="#fff" stroke="#777" stroke-width="1"/></svg>
<div class="a" style="left:244px;top:166px;width:1347px;height:161px;background:#fff;border:1px solid #c9c9c9;border-top:none"></div>
<div class="a" style="left:24px;top:351px;width:1879px;height:650px;background:#fff;border-top:1px solid #bdbdbd"></div>
<div class="a" style="left:0;top:346px;width:24px;height:655px;background:#fff"></div><div class="a" style="left:4px;top:349px;width:13px;height:85px;background:#e2e2e2"></div><div class="a" style="left:4px;top:434px;width:13px;height:567px;background:#fff;border-left:1px solid #e6e6e6;border-right:1px solid #e6e6e6"></div><svg style="left:0;top:0" width="24" height="1080"><path d="M9 401.5H14" stroke="#a6a6a6"/><rect x="11" y="385.0" width="1.5" height="1" fill="#a6a6a6"/><rect x="11" y="417.0" width="1.5" height="1" fill="#a6a6a6"/><text x="0" y="0" transform="translate(15.2 369.0) rotate(-90)" text-anchor="middle" font-size="10.2" fill="#444" font-family="Liberation Sans, sans-serif">1</text><path d="M9 465.5H14" stroke="#a6a6a6"/><rect x="11" y="449.0" width="1.5" height="1" fill="#a6a6a6"/><rect x="11" y="481.0" width="1.5" height="1" fill="#a6a6a6"/><path d="M9 529.5H14" stroke="#a6a6a6"/><rect x="11" y="513.0" width="1.5" height="1" fill="#a6a6a6"/><rect x="11" y="545.0" width="1.5" height="1" fill="#a6a6a6"/><text x="0" y="0" transform="translate(15.2 497.0) rotate(-90)" text-anchor="middle" font-size="10.2" fill="#444" font-family="Liberation Sans, sans-serif">1</text><path d="M9 593.5H14" stroke="#a6a6a6"/><rect x="11" y="577.0" width="1.5" height="1" fill="#a6a6a6"/><rect x="11" y="609.0" width="1.5" height="1" fill="#a6a6a6"/><text x="0" y="0" transform="translate(15.2 561.0) rotate(-90)" text-anchor="middle" font-size="10.2" fill="#444" font-family="Liberation Sans, sans-serif">2</text><path d="M9 657.5H14" stroke="#a6a6a6"/><rect x="11" y="641.0" width="1.5" height="1" fill="#a6a6a6"/><rect x="11" y="673.0" width="1.5" height="1" fill="#a6a6a6"/><text x="0" y="0" transform="translate(15.2 625.0) rotate(-90)" text-anchor="middle" font-size="10.2" fill="#444" font-family="Liberation Sans, sans-serif">3</text><path d="M9 721.5H14" stroke="#a6a6a6"/><rect x="11" y="705.0" width="1.5" height="1" fill="#a6a6a6"/><rect x="11" y="737.0" width="1.5" height="1" fill="#a6a6a6"/><text x="0" y="0" transform="translate(15.2 689.0) rotate(-90)" text-anchor="middle" font-size="10.2" fill="#444" font-family="Liberation Sans, sans-serif">4</text><path d="M9 785.5H14" stroke="#a6a6a6"/><rect x="11" y="769.0" width="1.5" height="1" fill="#a6a6a6"/><rect x="11" y="801.0" width="1.5" height="1" fill="#a6a6a6"/><text x="0" y="0" transform="translate(15.2 753.0) rotate(-90)" text-anchor="middle" font-size="10.2" fill="#444" font-family="Liberation Sans, sans-serif">5</text><path d="M9 849.5H14" stroke="#a6a6a6"/><rect x="11" y="833.0" width="1.5" height="1" fill="#a6a6a6"/><rect x="11" y="865.0" width="1.5" height="1" fill="#a6a6a6"/><text x="0" y="0" transform="translate(15.2 817.0) rotate(-90)" text-anchor="middle" font-size="10.2" fill="#444" font-family="Liberation Sans, sans-serif">6</text><path d="M9 913.5H14" stroke="#a6a6a6"/><rect x="11" y="897.0" width="1.5" height="1" fill="#a6a6a6"/><rect x="11" y="929.0" width="1.5" height="1" fill="#a6a6a6"/><text x="0" y="0" transform="translate(15.2 881.0) rotate(-90)" text-anchor="middle" font-size="10.2" fill="#444" font-family="Liberation Sans, sans-serif">7</text><path d="M9 977.5H14" stroke="#a6a6a6"/><rect x="11" y="961.0" width="1.5" height="1" fill="#a6a6a6"/><rect x="11" y="993.0" width="1.5" height="1" fill="#a6a6a6"/><text x="0" y="0" transform="translate(15.2 945.0) rotate(-90)" text-anchor="middle" font-size="10.2" fill="#444" font-family="Liberation Sans, sans-serif">8</text></svg>
<div class="a" style="left:93px;top:476px;width:1700px;height:457px;background:#fff;border:1px solid #d9d9d9"></div><svg style="left:0;top:0" width="1920" height="1080"><path d="M145 816.5H1773" stroke="#d9d9d9" stroke-width="1.1"/><path d="M145 782.7H1773" stroke="#d9d9d9" stroke-width="1.1"/><path d="M145 748.9H1773" stroke="#d9d9d9" stroke-width="1.1"/><path d="M145 715.1H1773" stroke="#d9d9d9" stroke-width="1.1"/><path d="M145 681.2H1773" stroke="#d9d9d9" stroke-width="1.1"/><path d="M145 647.4H1773" stroke="#d9d9d9" stroke-width="1.1"/><path d="M145 613.6H1773" stroke="#d9d9d9" stroke-width="1.1"/><path d="M145 579.8H1773" stroke="#d9d9d9" stroke-width="1.1"/><path d="M145 546.0H1773" stroke="#d9d9d9" stroke-width="1.1"/><path d="M145.4 816.5v6M175.8 816.5v6M206.2 816.5v6M236.6 816.5v6M267.0 816.5v6M297.4 816.5v6M327.8 816.5v6M358.2 816.5v6M388.6 816.5v6M419.0 816.5v6M449.4 816.5v6M479.8 816.5v6M510.2 816.5v6M540.6 816.5v6M571.0 816.5v6M601.4 816.5v6M631.8 816.5v6M662.2 816.5v6M692.6 816.5v6M723.0 816.5v6M753.4 816.5v6M783.8 816.5v6M814.2 816.5v6M844.6 816.5v6M875.0 816.5v6M905.4 816.5v6M935.8 816.5v6M966.2 816.5v6M996.6 816.5v6M1027.0 816.5v6M1057.4 816.5v6M1087.8 816.5v6M1118.2 816.5v6M1148.6 816.5v6M1179.0 816.5v6M1209.4 816.5v6M1239.8 816.5v6M1270.2 816.5v6M1300.6 816.5v6M1331.0 816.5v6M1361.4 816.5v6M1391.8 816.5v6M1422.2 816.5v6M1452.6 816.5v6M1483.0 816.5v6M1513.4 816.5v6M1543.8 816.5v6M1574.2 816.5v6M1604.6 816.5v6M1635.0 816.5v6M1665.4 816.5v6M1695.8 816.5v6M1726.2 816.5v6M1756.6 816.5v6" stroke="#d9d9d9" stroke-width="1.1"/><path d="M153.0 652.2L168.2 665.7L183.4 663.7L198.6 641.4L213.8 630.5L229.0 629.2L244.2 635.3L259.4 642.0L274.6 638.0L289.8 646.1L305.0 650.8L320.2 654.9L335.4 650.1L350.6 682.6L365.8 702.2L381.0 650.1L396.2 635.9L411.4 622.4L426.6 615.7L441.8 644.7L457.0 654.9L472.2 621.7L487.4 690.7L502.6 650.1L517.8 650.1L533.0 647.4L548.2 616.7L563.4 613.6L578.6 624.4L593.8 629.5L609.0 638.6L624.2 614.3L639.4 673.8L654.6 628.5L669.8 620.4L685.0 649.8L700.2 677.2L715.4 630.5L730.6 615.7L745.8 606.9L761.0 595.4L776.2 644.7L791.4 621.7L806.6 610.2L821.8 601.8L837.0 611.6L852.2 615.7L867.4 608.9L882.6 607.5L897.8 617.7L913.0 614.3L928.2 601.5L943.4 607.5L958.6 607.5L973.8 602.8L989.0 604.2L1004.2 598.7L1019.4 596.7L1034.6 602.8L1049.8 599.4L1065.0 593.3L1080.2 602.1L1095.4 607.5L1110.6 596.7L1125.8 602.1L1141.0 599.4L1156.2 592.7M1201.8 602.1L1217.0 583.9L1232.2 579.8L1247.4 581.2L1262.6 586.2L1277.8 624.8L1293.0 616.3L1308.2 596.0L1323.4 591.3L1338.6 656.2L1353.8 609.2L1369.0 614.3L1384.2 602.1L1399.4 639.3L1414.6 615.7L1429.8 601.5L1445.0 605.5L1460.2 644.7L1475.4 636.6L1490.6 614.3L1505.8 605.5L1521.0 592.7L1536.2 612.3L1551.4 612.3L1566.6 633.2L1581.8 625.8L1597.0 631.2L1612.2 682.6L1627.4 651.5L1642.6 638.6L1657.8 679.9L1673.0 631.2L1688.2 631.2L1703.4 656.2" fill="none" stroke="#5b9bd5" stroke-width="3.3" stroke-linejoin="round" stroke-linecap="round"/><path d="M153.0 631.9L168.2 640.0L183.4 636.6L198.6 630.5L213.8 621.1L229.0 621.1L244.2 619.0L259.4 619.7L274.6 629.2L289.8 623.1L305.0 650.1L320.2 642.0L335.4 646.8L350.6 658.9L365.8 665.7L381.0 625.8L396.2 617.7L411.4 604.8L426.6 598.7L441.8 616.3L457.0 627.1L472.2 617.0L487.4 688.7L502.6 665.7L517.8 651.5L533.0 623.1L548.2 596.0L563.4 583.9L578.6 607.5L593.8 612.9L609.0 630.5L624.2 608.2L639.4 665.7L654.6 624.4L669.8 615.7L685.0 623.1L700.2 624.8L715.4 599.4L730.6 582.5L745.8 580.1L761.0 579.1L776.2 607.5L791.4 596.0L806.6 591.3L821.8 591.3L837.0 583.9L852.2 577.1L867.4 575.8L882.6 592.7L897.8 583.2L913.0 601.5L928.2 575.1L943.4 587.9L958.6 577.4L973.8 596.7L989.0 588.6L1004.2 584.5L1019.4 572.4L1034.6 587.3L1049.8 590.3L1065.0 579.1L1080.2 578.8L1095.4 580.2L1110.6 584.5L1125.8 594.0L1141.0 582.5L1156.2 586.2L1171.4 597.7L1186.6 593.3L1201.8 582.5L1217.0 579.1L1232.2 574.7L1247.4 560.9L1262.6 571.7L1277.8 583.9L1293.0 602.8L1308.2 593.3L1323.4 587.9L1338.6 637.3L1353.8 616.3L1369.0 596.7L1384.2 583.9L1399.4 598.7L1414.6 589.3L1429.8 591.3L1445.0 587.9L1460.2 606.9L1475.4 596.0L1490.6 587.9L1505.8 582.5L1521.0 580.5L1536.2 587.9L1551.4 585.9L1566.6 611.6L1581.8 600.1L1597.0 610.9L1612.2 673.8L1627.4 625.1L1642.6 618.0L1657.8 665.4L1673.0 616.3L1688.2 606.9L1703.4 651.5L1718.6 683.3L1733.8 675.2L1749.0 665.7L1764.2 629.9" fill="none" stroke="#ed7d31" stroke-width="3.3" stroke-linejoin="round" stroke-linecap="round"/><path d="M153.0 641.0L168.2 652.2L183.4 653.5L198.6 650.1L213.8 638.6L229.0 628.5L244.2 638.6L259.4 636.6L274.6 640.7L289.8 627.8L305.0 662.3L320.2 654.9L335.4 659.6L350.6 679.9L365.8 695.5L381.0 642.0L396.2 628.5L411.4 620.4L426.6 613.6L441.8 644.7L457.0 651.5L472.2 621.7L487.4 690.7L502.6 665.7L517.8 656.9L533.0 648.1L548.2 609.2L563.4 598.1L578.6 616.3L593.8 620.4L609.0 642.7L624.2 616.3L639.4 675.2L654.6 637.3L669.8 620.4L685.0 630.5L700.2 670.4L715.4 616.3L730.6 598.1L745.8 593.3L761.0 591.3M837.0 600.1L852.2 611.6L867.4 592.0M928.2 593.0L943.4 607.5L958.6 602.8L973.8 611.6L989.0 605.5L1004.2 599.4L1019.4 586.2L1034.6 598.7L1049.8 602.1L1065.0 587.9L1080.2 590.3L1095.4 607.5L1110.6 590.6L1125.8 602.8L1141.0 602.1L1156.2 594.0M1186.6 605.5L1201.8 594.0L1217.0 588.9L1232.2 582.5L1247.4 576.4L1262.6 578.5L1277.8 590.6L1293.0 610.2L1308.2 595.4L1323.4 591.3L1338.6 656.2L1353.8 619.7L1369.0 611.6L1384.2 596.7L1399.4 633.2L1414.6 601.5L1429.8 601.5L1445.0 598.7L1460.2 633.2L1475.4 610.9L1490.6 602.1L1505.8 593.3L1521.0 592.0L1536.2 594.7L1551.4 602.8L1566.6 629.5L1581.8 616.7L1597.0 635.9L1612.2 683.3L1627.4 649.8L1642.6 630.5L1657.8 679.9L1673.0 631.2L1688.2 627.8L1703.4 653.5L1718.6 671.1L1733.8 683.3L1749.0 671.1L1764.2 642.0" fill="none" stroke="#a5a5a5" stroke-width="3.3" stroke-linejoin="round" stroke-linecap="round"/><rect x="273" y="728" width="127" height="72" fill="#fff"/><rect x="777" y="728" width="127" height="72" fill="#fff"/><rect x="1249" y="728" width="127" height="72" fill="#fff"/><rect x="1579" y="728" width="149" height="72" fill="#fff"/><path d="M597.5 535L595.5 844" stroke="#0b1f5b" stroke-width="3"/><path d="M1083 535L1081 841" stroke="#0b1f5b" stroke-width="3"/><path d="M1540.5 532L1538.5 841" stroke="#0b1f5b" stroke-width="3"/><ellipse cx="1003.5" cy="583.7" rx="271" ry="50.2" fill="none" stroke="#f60606" stroke-width="5.3"/><path d="M241.5 903H278.5" stroke="#5b9bd5" stroke-width="3"/><path d="M747.5 903H785" stroke="#ed7d31" stroke-width="3"/><path d="M1306.5 903H1343.5" stroke="#a5a5a5" stroke-width="3"/><text transform="translate(158.6 827.2) rotate(-90)" text-anchor="end" font-size="14.3" fill="#333" font-family="Liberation Sans, sans-serif">1-giu</text><text transform="translate(189.0 827.2) rotate(-90)" text-anchor="end" font-size="14.3" fill="#333" font-family="Liberation Sans, sans-serif">3-giu</text><text transform="translate(219.4 827.2) rotate(-90)" text-anchor="end" font-size="14.3" fill="#333" font-family="Liberation Sans, sans-serif">5-giu</text><text transform="translate(249.8 827.2) rotate(-90)" text-anchor="end" font-size="14.3" fill="#333" font-family="Liberation Sans, sans-serif">7-giu</text><text transform="translate(280.2 827.2) rotate(-90)" text-anchor="end" font-size="14.3" fill="#333" font-family="Liberation Sans, sans-serif">9-giu</text><text transform="translate(310.6 827.2) rotate(-90)" text-anchor="end" font-size="14.3" fill="#333" font-family="Liberation Sans, sans-serif">11-giu</text><text transform="translate(341.0 827.2) rotate(-90)" text-anchor="end" font-size="14.3" fill="#333" font-family="Liberation Sans, sans-serif">13-giu</text><text transform="translate(371.4 827.2) rotate(-90)" text-anchor="end" font-size="14.3" fill="#333" font-family="Liberation Sans, sans-serif">15-giu</text><text transform="translate(401.8 827.2) rotate(-90)" text-anchor="end" font-size="14.3" fill="#333" font-family="Liberation Sans, sans-serif">17-giu</text><text transform="translate(432.2 827.2) rotate(-90)" text-anchor="end" font-size="14.3" fill="#333" font-family="Liberation Sans, sans-serif">19-giu</text><text transform="translate(462.6 827.2) rotate(-90)" text-anchor="end" font-size="14.3" fill="#333" font-family="Liberation Sans, sans-serif">21-giu</text><text transform="translate(493.0 827.2) rotate(-90)" text-anchor="end" font-size="14.3" fill="#333" font-family="Liberation Sans, sans-serif">23-giu</text><text transform="translate(523.4 827.2) rotate(-90)" text-anchor="end" font-size="14.3" fill="#333" font-family="Liberation Sans, sans-serif">25-giu</text><text transform="translate(553.8 827.2) rotate(-90)" text-anchor="end" font-size="14.3" fill="#333" font-family="Liberation Sans, sans-serif">27-giu</text><text transform="translate(584.2 827.2) rotate(-90)" text-anchor="end" font-size="14.3" fill="#333" font-family="Liberation Sans, sans-serif">29-giu</text><text transform="translate(614.6 827.2) rotate(-90)" text-anchor="end" font-size="14.3" fill="#333" font-family="Liberation Sans, sans-serif">1-lug</text><text transform="translate(645.0 827.2) rotate(-90)" text-anchor="end" font-size="14.3" fill="#333" font-family="Liberation Sans, sans-serif">3-lug</text><text transform="translate(675.4 827.2) rotate(-90)" text-anchor="end" font-size="14.3" fill="#333" font-family="Liberation Sans, sans-serif">5-lug</text><text transform="translate(705.8 827.2) rotate(-90)" text-anchor="end" font-size="14.3" fill="#333" font-family="Liberation Sans, sans-serif">7-lug</text><text transform="translate(736.2 827.2) rotate(-90)" text-anchor="end" font-size="14.3" fill="#333" font-family="Liberation Sans, sans-serif">9-lug</text><text transform="translate(766.6 827.2) rotate(-90)" text-anchor="end" font-size="14.3" fill="#333" font-family="Liberation Sans, sans-serif">11-lug</text><text transform="translate(797.0 827.2) rotate(-90)" text-anchor="end" font-size="14.3" fill="#333" font-family="Liberation Sans, sans-serif">13-lug</text><text transform="translate(827.4 827.2) rotate(-90)" text-anchor="end" font-size="14.3" fill="#333" font-family="Liberation Sans, sans-serif">15-lug</text><text transform="translate(857.8 827.2) rotate(-90)" text-anchor="end" font-size="14.3" fill="#333" font-family="Liberation Sans, sans-serif">17-lug</text><text transform="translate(888.2 827.2) rotate(-90)" text-anchor="end" font-size="14.3" fill="#333" font-family="Liberation Sans, sans-serif">19-lug</text><text transform="translate(918.6 827.2) rotate(-90)" text-anchor="end" font-size="14.3" fill="#333" font-family="Liberation Sans, sans-serif">21-lug</text><text transform="translate(949.0 827.2) rotate(-90)" text-anchor="end" font-size="14.3" fill="#333" font-family="Liberation Sans, sans-serif">23-lug</text><text transform="translate(979.4 827.2) rotate(-90)" text-anchor="end" font-size="14.3" fill="#333" font-family="Liberation Sans, sans-serif">25-lug</text><text transform="translate(1009.8 827.2) rotate(-90)" text-anchor="end" font-size="14.3" fill="#333" font-family="Liberation Sans, sans-serif">27-lug</text><text transform="translate(1040.2 827.2) rotate(-90)" text-anchor="end" font-size="14.3" fill="#333" font-family="Liberation Sans, sans-serif">29-lug</text><text transform="translate(1070.6 827.2) rotate(-90)" text-anchor="end" font-size="14.3" fill="#333" font-family="Liberation Sans, sans-serif">31-lug</text><text transform="translate(1101.0 828.6) rotate(-90)" text-anchor="end" font-size="14.6" fill="#333" font-family="Liberation Sans, sans-serif">2-ago</text><text transform="translate(1131.4 828.6) rotate(-90)" text-anchor="end" font-size="14.6" fill="#333" font-family="Liberation Sans, sans-serif">4-ago</text><text transform="translate(1161.8 828.6) rotate(-90)" text-anchor="end" font-size="14.6" fill="#333" font-family="Liberation Sans, sans-serif">6-ago</text><text transform="translate(1192.2 828.6) rotate(-90)" text-anchor="end" font-size="14.6" fill="#333" font-family="Liberation Sans, sans-serif">8-ago</text><text transform="translate(1222.6 828.6) rotate(-90)" text-anchor="end" font-size="14.6" fill="#333" font-family="Liberation Sans, sans-serif">10-ago</text><text transform="translate(1253.0 828.6) rotate(-90)" text-anchor="end" font-size="14.6" fill="#333" font-family="Liberation Sans, sans-serif">12-ago</text><text transform="translate(1283.4 828.6) rotate(-90)" text-anchor="end" font-size="14.6" fill="#333" font-family="Liberation Sans, sans-serif">14-ago</text><text transform="translate(1313.8 828.6) rotate(-90)" text-anchor="end" font-size="14.6" fill="#333" font-family="Liberation Sans, sans-serif">16-ago</text><text transform="translate(1344.2 828.6) rotate(-90)" text-anchor="end" font-size="14.6" fill="#333" font-family="Liberation Sans, sans-serif">18-ago</text><text transform="translate(1374.6 828.6) rotate(-90)" text-anchor="end" font-size="14.6" fill="#333" font-family="Liberation Sans, sans-serif">20-ago</text><text transform="translate(1405.0 828.6) rotate(-90)" text-anchor="end" font-size="14.6" fill="#333" font-family="Liberation Sans, sans-serif">22-ago</text><text transform="translate(1435.4 828.6) rotate(-90)" text-anchor="end" font-size="14.6" fill="#333" font-family="Liberation Sans, sans-serif">24-ago</text><text transform="translate(1465.8 828.6) rotate(-90)" text-anchor="end" font-size="14.6" fill="#333" font-family="Liberation Sans, sans-serif">26-ago</text><text transform="translate(1496.2 828.6) rotate(-90)" text-anchor="end" font-size="14.6" fill="#333" font-family="Liberation Sans, sans-serif">28-ago</text><text transform="translate(1526.6 828.6) rotate(-90)" text-anchor="end" font-size="14.6" fill="#333" font-family="Liberation Sans, sans-serif">30-ago</text><text transform="translate(1557.0 828.6) rotate(-90)" text-anchor="end" font-size="14.6" fill="#333" font-family="Liberation Sans, sans-serif">1-set</text><text transform="translate(1587.4 828.6) rotate(-90)" text-anchor="end" font-size="14.6" fill="#333" font-family="Liberation Sans, sans-serif">3-set</text><text transform="translate(1617.8 828.6) rotate(-90)" text-anchor="end" font-size="14.6" fill="#333" font-family="Liberation Sans, sans-serif">5-set</text><text transform="translate(1648.2 828.6) rotate(-90)" text-anchor="end" font-size="14.6" fill="#333" font-family="Liberation Sans, sans-serif">7-set</text><text transform="translate(1678.6 828.6) rotate(-90)" text-anchor="end" font-size="14.6" fill="#333" font-family="Liberation Sans, sans-serif">9-set</text><text transform="translate(1709.0 828.6) rotate(-90)" text-anchor="end" font-size="14.6" fill="#333" font-family="Liberation Sans, sans-serif">11-set</text><text transform="translate(1739.4 828.6) rotate(-90)" text-anchor="end" font-size="14.6" fill="#333" font-family="Liberation Sans, sans-serif">13-set</text><text transform="translate(1769.8 828.6) rotate(-90)" text-anchor="end" font-size="14.6" fill="#333" font-family="Liberation Sans, sans-serif">15-set</text></svg><span class="t" style="left:587.83px;top:493px;font-size:24.20px;line-height:27px;color:#111;transform:scaleX(0.9688);">Confronto Massimi Valori medi orari rilevati a Monza - Lecco - Colico</span><span class="t" style="left:115.42px;top:807px;font-size:16.50px;line-height:18px;color:#222;transform:scaleX(1.1626);">0</span><span class="t" style="left:115.22px;top:773px;font-size:16.50px;line-height:18px;color:#222;transform:scaleX(1.1869);">5</span><span class="t" style="left:105.30px;top:739px;font-size:16.50px;line-height:18px;color:#222;transform:scaleX(1.1281);">10</span><span class="t" style="left:105.30px;top:705px;font-size:16.50px;line-height:18px;color:#222;transform:scaleX(1.1281);">15</span><span class="t" style="left:105.69px;top:671px;font-size:16.50px;line-height:18px;color:#222;transform:scaleX(1.1062);">20</span><span class="t" style="left:105.69px;top:638px;font-size:16.50px;line-height:18px;color:#222;transform:scaleX(1.1062);">25</span><span class="t" style="left:106.06px;top:604px;font-size:16.50px;line-height:18px;color:#222;transform:scaleX(1.0851);">30</span><span class="t" style="left:106.06px;top:570px;font-size:16.50px;line-height:18px;color:#222;transform:scaleX(1.0851);">35</span><span class="t" style="left:106.25px;top:536px;font-size:16.50px;line-height:18px;color:#222;transform:scaleX(1.0749);">40</span><span class="t" style="left:288.85px;top:742px;font-size:22.90px;line-height:26px;color:#111;transform:scaleX(1.0013);">Giugno</span><span class="t" style="left:793.12px;top:742px;font-size:22.90px;line-height:26px;color:#111;transform:scaleX(1.0275);">Luglio</span><span class="t" style="left:1266.00px;top:740px;font-size:22.90px;line-height:26px;color:#111;transform:scaleX(0.9925);">Agosto</span><span class="t" style="left:1595.06px;top:742px;font-size:22.90px;line-height:26px;color:#111;transform:scaleX(1.0292);">Settembre</span><span class="t" style="left:281.06px;top:893px;font-size:18.10px;line-height:20px;color:#222;transform:scaleX(1.0349);">Colico Madoneta - Massimo Valore Medio Orario</span><span class="t" style="left:790.49px;top:893px;font-size:18.10px;line-height:20px;color:#222;transform:scaleX(1.0411);">Monza Monte Generoso Massimo Valore Medio Orario</span><span class="t" style="left:1350.51px;top:893px;font-size:18.10px;line-height:20px;color:#222;transform:scaleX(1.0303);">Lecco Massimo Valore Medio Orario</span><span class="t" style="left:684.08px;top:950px;font-size:18.60px;line-height:21px;color:#4a78ab;transform:scaleX(0.9878);">Grafico 4 Confronto massimi valori medi orari Monza, Lecco e Colico</span><div class="a" style="left:93px;top:976px;width:1px;height:25px;background:#000"></div>
<div class="a" style="left:0;top:1018px;width:1920px;height:22px;background:#2b579a"></div><span class="t" style="left:7.53px;top:1022px;font-size:11.50px;line-height:12px;color:#fff;transform:scaleX(0.9499);">PAGINA 6 DI 16</span><span class="t" style="left:102.79px;top:1022px;font-size:11.50px;line-height:12px;color:#fff;transform:scaleX(0.9088);">3600 PAROLE</span><svg style="left:188px;top:1022px" width="15" height="13" viewBox="0 0 15 13"><path d="M0.5 0.5H4Q6 0.5 6.5 2V11.5Q6 10 4 10H0.5Z" fill="none" stroke="#fff" stroke-width="1"/><path d="M6.5 2Q7 0.5 9 0.5H10 M6.5 11.5Q7 10 9 10H12.5V8.5 M6.5 10.5V12.7 M5.3 11.5L6.5 12.7L7.7 11.5" fill="none" stroke="#fff" stroke-width="1"/><path d="M9.5 2.5L13.5 7M13.5 2.5L9.5 7" stroke="#fff" stroke-width="1.5"/></svg><svg style="left:1640px;top:1022px" width="14" height="13" viewBox="0 0 14 13"><path d="M0.5 0.5H5Q6.5 0.5 6.7 1.8V10.8Q6.5 9.8 5 9.8H0.5Z M13.2 0.5H8.5Q7 0.5 6.8 1.8V10.8Q7 9.8 8.5 9.8H13.2Z" fill="none" stroke="#fff" stroke-width="1"/><path d="M2 2.5H5M2 4.5H5M2 6.5H5M2 8.5H5M8.5 2.5H11.5M8.5 4.5H11.5M8.5 6.5H11.5M8.5 8.5H11.5" stroke="#fff" stroke-width="0.9"/><path d="M5.5 11.2L6.75 12.6L8 11.2" fill="none" stroke="#fff"/></svg><div class="a" style="left:1666px;top:1018px;width:38px;height:22px;background:#214b8d"></div><svg style="left:1678px;top:1022px" width="15" height="13" viewBox="0 0 15 13"><rect x="0.6" y="0.6" width="13.3" height="11.8" fill="none" stroke="#fff" stroke-width="1.2"/><path d="M2.5 3H12M2.5 5.2H12M2.5 7.4H12M2.5 9.6H12" stroke="#fff" stroke-width="1.1"/></svg><svg style="left:1716px;top:1022px" width="15" height="14" viewBox="0 0 15 14"><path d="M0.6 9.5V0.6H10.8V5" fill="none" stroke="#fff" stroke-width="1.2"/><path d="M2.5 3H9M2.5 5.2H8M2.5 7.4H6" stroke="#fff" stroke-width="1.1"/><circle cx="10.3" cy="9.6" r="3.6" fill="#fff"/><path d="M8 8.5Q10 9.5 9.5 11.5 M11 7Q11.5 9 13 9.5" stroke="#2b579a" fill="none" stroke-width="0.9"/></svg><div class="a" style="left:1747px;top:1027.8px;width:6px;height:2.2px;background:#fff"></div><div class="a" style="left:1757px;top:1028.3px;width:100px;height:1px;background:#fff"></div><div class="a" style="left:1807.2px;top:1025px;width:1px;height:7.5px;background:#fff"></div><div class="a" style="left:1813.6px;top:1023px;width:4.6px;height:11px;background:#fff"></div><div class="a" style="left:1861.2px;top:1027.8px;width:8px;height:2.2px;background:#fff"></div><div class="a" style="left:1864.1px;top:1024.9px;width:2.2px;height:8px;background:#fff"></div><span class="t" style="left:1885.57px;top:1022px;font-size:11.50px;line-height:12px;color:#fff;transform:scaleX(0.9049);">170%</span><div class="a" style="left:0;top:1040px;width:1920px;height:40px;background:#202d3d"></div><svg style="left:16px;top:1052px" width="17" height="17" viewBox="0 0 17 17"><path d="M0 2.3L7 1.3V8H0Z M8 1.2L16.5 0V8H8Z M0 9H7V15.7L0 14.7Z M8 9H16.5V17L8 15.8Z" fill="#fff"/></svg><div class="a" style="left:48.3px;top:1040px;width:287.3px;height:40px;background:#f2f2f2;border-bottom:1px solid #d0d0d0"></div><svg style="left:59px;top:1051px" width="18" height="18" viewBox="0 0 18 18"><circle cx="11.3" cy="6.7" r="5" fill="none" stroke="#222" stroke-width="1.4"/><path d="M7.7 10.4L1.4 16.2" stroke="#222" stroke-width="1.5"/></svg><span class="t" style="left:87.41px;top:1053px;font-size:14.40px;line-height:16px;color:#333;transform:scaleX(0.9595);">Cerca</span><svg style="left:351.8px;top:1048.7px" width="23" height="23" viewBox="0 0 23 23"><circle cx="11.3" cy="11.3" r="11.2" fill="#1f8ad6"/><path d="M1 14Q5 11.5 8.5 13.8Q12 10.5 19 12Q13 12.5 10.5 17Q7 14 1 14Z" fill="#fff"/><path d="M9 7.5Q11 6.2 12.8 7.4Q14.8 5.5 18.5 6.2Q15 6.8 13.8 9Q12 7.6 9 7.5Z" fill="#fff"/></svg><svg style="left:400px;top:1049px" width="25" height="23" viewBox="0 0 25 23"><g transform="translate(0.0 1.0)"><path d="M0 1.5L4.5 0L9 1.5V9.5L4.5 11L0 9.5Z" fill="#f0c63a"/><path d="M0 3.6L4.5 5L9 3.6V7.2L4.5 8.6L0 7.2Z" fill="#4fb3bf"/><path d="M0 1.5L4.5 3L9 1.5" fill="none" stroke="#d9a91f" stroke-width="0.8"/></g><g transform="translate(3.6 2.6)"><path d="M0 1.5L4.5 0L9 1.5V9.5L4.5 11L0 9.5Z" fill="#f0c63a"/><path d="M0 3.6L4.5 5L9 3.6V7.2L4.5 8.6L0 7.2Z" fill="#4fb3bf"/><path d="M0 1.5L4.5 3L9 1.5" fill="none" stroke="#d9a91f" stroke-width="0.8"/></g><g transform="translate(7.2 4.2)"><path d="M0 1.5L4.5 0L9 1.5V9.5L4.5 11L0 9.5Z" fill="#f0c63a"/><path d="M0 3.6L4.5 5L9 3.6V7.2L4.5 8.6L0 7.2Z" fill="#4fb3bf"/><path d="M0 1.5L4.5 3L9 1.5" fill="none" stroke="#d9a91f" stroke-width="0.8"/></g><ellipse cx="17.3" cy="9.6" rx="7" ry="2.9" fill="#7fd3db"/><path d="M10.3 9.6V19.8A7 2.9 0 0 0 24.3 19.8V9.6A7 2.9 0 0 1 10.3 9.6Z" fill="#2f9db0"/><path d="M10.3 12.8A7 2.9 0 0 0 24.3 12.8M10.3 16.2A7 2.9 0 0 0 24.3 16.2" fill="none" stroke="#86d6de" stroke-width="1"/></svg><svg style="left:450px;top:1050.5px" width="22" height="19" viewBox="0 0 22 19"><path d="M0 1H8L10 3H22V18H0Z" fill="#e8a92c"/><path d="M0 4.5H22V18H0Z" fill="#ffd557"/><path d="M4.5 18V10.5H17.5V18H14V13.5H8V18Z" fill="#3b8fdd"/></svg><svg style="left:497.7px;top:1047.7px" width="25" height="25" viewBox="0 0 25 25"><rect width="25" height="25" fill="#fff"/><path d="M4 10Q12 3 22 8" fill="none" stroke="#7db2dd" stroke-width="1.2"/><text x="12.5" y="14" text-anchor="middle" font-size="3.6" fill="#4a7fb0" font-family="Liberation Sans, sans-serif" font-weight="bold">HARMAN</text><path d="M6 17Q13 19 20 16" fill="none" stroke="#9cc4e4" stroke-width="0.8"/></svg><div class="a" style="left:535px;top:1040px;width:44.2px;height:40px;background:#454f5c"></div><div class="a" style="left:535px;top:1077.5px;width:44px;height:2.5px;background:#7db3e8"></div><svg style="left:548px;top:1049px" width="22" height="22" viewBox="0 0 22 19" preserveAspectRatio="none"><rect x="11" y="1.5" width="10.5" height="16" fill="#fff"/><path d="M13 4H20M13 6.5H20M13 9H20M13 11.5H20M13 14H20" stroke="#2b579a" stroke-width="1.2"/><path d="M0 1.5L13 0V19L0 17.5Z" fill="#2a5599"/><path d="M2.5 6L4.3 13L6.3 7.5L8.3 13L10.2 6" fill="none" stroke="#fff" stroke-width="1.5"/></svg><div class="a" style="left:588px;top:1077.5px;width:40px;height:2.5px;background:#7db3e8"></div><svg style="left:595.6px;top:1047.6px" width="25" height="24.6" viewBox="0 0 25 24" preserveAspectRatio="none"><circle cx="12.5" cy="11.5" r="11.3" fill="#1b74c9"/><path d="M1.2 11.5A11.3 11.3 0 0 1 23.8 11.5Q23.8 16.5 18.5 16.5Q14 16.5 14.5 13Q15 9.5 11 9.5Q5 9.5 4 17Q1.2 15 1.2 11.5Z" fill="#39c2d7"/><path d="M8 2Q17 -1 22.5 6.5Q24.5 10.5 23 14Q20 16.8 16 16Q19 13 17 9Q14 4 8 2Z" fill="#5cd269"/><circle cx="7.5" cy="18.5" r="5" fill="#c9c2bd"/><circle cx="7.5" cy="17" r="1.9" fill="#f1e9e4"/><path d="M4 21.5Q7.5 17.5 11 21.5Q7.5 24.5 4 21.5Z" fill="#f1e9e4"/></svg><div class="a" style="left:637px;top:1077.5px;width:39.7px;height:2.5px;background:linear-gradient(90deg,#7db3e8 31.3px,#55779a 31.3px)"></div><svg style="left:645.3px;top:1049px" width="22.5" height="22" viewBox="0 0 23 19" preserveAspectRatio="none"><rect x="11" y="1.5" width="11.5" height="16" fill="#fff"/><path d="M13 4H21.5M13 7H21.5M13 10H21.5M13 13H21.5M13 16H21.5M17 2V17.5" stroke="#1e7145" stroke-width="1.1"/><path d="M0 1.5L13 0V19L0 17.5Z" fill="#1e7145"/><path d="M3.5 5.5L9.2 13.5M9.2 5.5L3.5 13.5" stroke="#fff" stroke-width="1.8"/></svg><svg style="left:1560.8px;top:1051.1px" width="17" height="17" viewBox="0 0 17 17"><circle cx="8" cy="8" r="7.5" fill="#2a7fc4"/><path d="M1 9L4 6L6 11L8.5 3L11 10L13 7L15.5 9" fill="none" stroke="#bfe3f7" stroke-width="1.3"/><rect x="9.5" y="10" width="7" height="7" fill="#3aa845"/><path d="M11 13.5L12.7 15.2L15.3 11.7" fill="none" stroke="#fff" stroke-width="1.2"/></svg><svg style="left:1584.3px;top:1051.1px" width="17" height="17" viewBox="0 0 17 17"><circle cx="12.5" cy="4" r="2.3" fill="#7b83eb"/><circle cx="7.5" cy="3.5" r="2.8" fill="#5b5fc7"/><path d="M5 7H16.5V12Q16.5 16 12.5 16H9Q5 16 5 12Z" fill="#5b5fc7"/><rect x="0.5" y="5" width="9.5" height="9.5" rx="1" fill="#4b53bc"/><path d="M3 7.5H8M5.5 7.5V12.5" stroke="#fff" stroke-width="1.4"/></svg><svg style="left:1608.5px;top:1051.1px" width="17" height="17" viewBox="0 0 17 17"><rect x="0.5" y="1" width="14" height="13" rx="2" fill="#f2cf1d"/><path d="M0.5 5H5L7 7.5H10 M0.5 9.5H4L6 11.5 M14.5 4.5H10L8.5 3 M5 1V4 M10 14V10.5" fill="none" stroke="#7a5c00" stroke-width="1.1"/><circle cx="13" cy="13" r="3.7" fill="#aaa"/></svg><svg style="left:1631.7px;top:1051.1px" width="17" height="17" viewBox="0 0 17 17"><rect x="0.5" y="1" width="16" height="15" rx="2.5" fill="#d9d90c"/><rect x="5.5" y="1" width="6" height="15" fill="#93930f"/><path d="M5.5 1V16M11.5 1V16" stroke="#e6e61a" stroke-width="1"/><path d="M0.5 4.5H5.5M0.5 8.5H5.5M0.5 12.5H5.5M11.5 4.5H16.5M11.5 8.5H16.5M11.5 12.5H16.5" stroke="#8a8a0a" stroke-width="1"/></svg><svg style="left:1657.1px;top:1051.1px" width="17" height="17" viewBox="0 0 17 17"><rect x="4" y="0.7" width="5" height="3.8" fill="none" stroke="#fff" stroke-width="1.1"/><path d="M5.3 2.3H6.2M6.9 2.3H7.8" stroke="#fff" stroke-width="0.9"/><rect x="2.6" y="4.5" width="8" height="11.5" rx="1" fill="none" stroke="#fff" stroke-width="1.2"/><path d="M9.5 13.5L11.5 15.5L15.5 10.5" fill="none" stroke="#cfd5db" stroke-width="1.1"/></svg><svg style="left:1680.3px;top:1051.1px" width="17" height="17" viewBox="0 0 17 17"><rect x="0.5" y="0.5" width="16" height="16" rx="1.5" fill="#2f8fd4"/><path d="M0.5 16.5L7 11L0.5 11Z" fill="#e8a23a"/><path d="M0.5 16.5H16.5V14L8 16Z" fill="#e8a23a"/><path d="M3 4H13V9H3Z M5 6.5H11 M8 9V12 M5 12H12" fill="none" stroke="#bfe0f5" stroke-width="1"/></svg><svg style="left:1704.4px;top:1051.1px" width="18" height="17" viewBox="0 0 18 17"><path d="M7.5 0.5L14 2.5V8Q14 13 7.5 16Q1 13 1 8V2.5Z" fill="#fff"/><path d="M7.5 0.5V16M1 7.5H14" stroke="#202d3d" stroke-width="1.3"/><path d="M12.5 8.5L17 16.5H8Z" fill="#f5b31b"/><path d="M12.5 11V14" stroke="#202d3d" stroke-width="1.2"/></svg><svg style="left:1728.5px;top:1051.1px" width="17" height="17" viewBox="0 0 17 17"><rect x="0.8" y="2" width="15.5" height="13" rx="4.5" fill="#9a9a98"/><rect x="5.5" y="4.5" width="6" height="8" fill="#c9c9c6" stroke="#5c5c5a" stroke-width="0.9"/><path d="M0.8 6.5H5.5M0.8 10.5H5.5M11.5 6.5H16.3M11.5 10.5H16.3M5.5 2V4.5M11.5 2V4.5M5.5 12.5V15M11.5 12.5V15" stroke="#5c5c5a" stroke-width="0.9"/></svg><svg style="left:1752.5px;top:1051.1px" width="17" height="17" viewBox="0 0 17 17"><rect x="3.8" y="2" width="12.5" height="9" fill="none" stroke="#fff" stroke-width="1.2"/><path d="M10 11V14.5M6.5 14.8H13.5" stroke="#fff" stroke-width="1.2"/><rect x="0.6" y="1" width="4" height="3.4" fill="#202d3d" stroke="#fff" stroke-width="1"/><path d="M2.6 4.4V8H3.8" fill="none" stroke="#fff" stroke-width="1"/></svg><svg style="left:1775.7px;top:1051.1px" width="17" height="17" viewBox="0 0 17 17"><path d="M0.8 6H3.5L7.2 2.5V14.5L3.5 11H0.8Z" fill="none" stroke="#fff" stroke-width="1.1"/><path d="M10 6L14.5 11M14.5 6L10 11" stroke="#fff" stroke-width="1.2"/></svg><span class="t" style="left:1818.04px;top:1044px;font-size:11.80px;line-height:14px;color:#fff;transform:scaleX(0.9216);">10:28</span><span class="t" style="left:1802.65px;top:1061px;font-size:11.80px;line-height:14px;color:#fff;transform:scaleX(0.9878);">08/10/2024</span><svg style="left:1879px;top:1052px" width="26" height="24" viewBox="0 0 26 24"><path d="M0.3 0.6H15.8V11.5H5.5L2.5 14.8V11.5H0.3Z" fill="#fff"/><path d="M2.5 3.2H13.5M2.5 5.7H13.5M2.5 8.2H13.5" stroke="#202d3d" stroke-width="1"/><circle cx="16" cy="14.8" r="7.6" fill="#1f2730" stroke="#7a7f86" stroke-width="1.2"/><text x="16" y="19.2" text-anchor="middle" font-size="11.5" font-weight="bold" fill="#fff" font-family="Liberation Sans, sans-serif">1</text></svg><div class="a" style="left:1915px;top:1040px;width:1px;height:40px;background:#5d6771"></div>
</body></html>
